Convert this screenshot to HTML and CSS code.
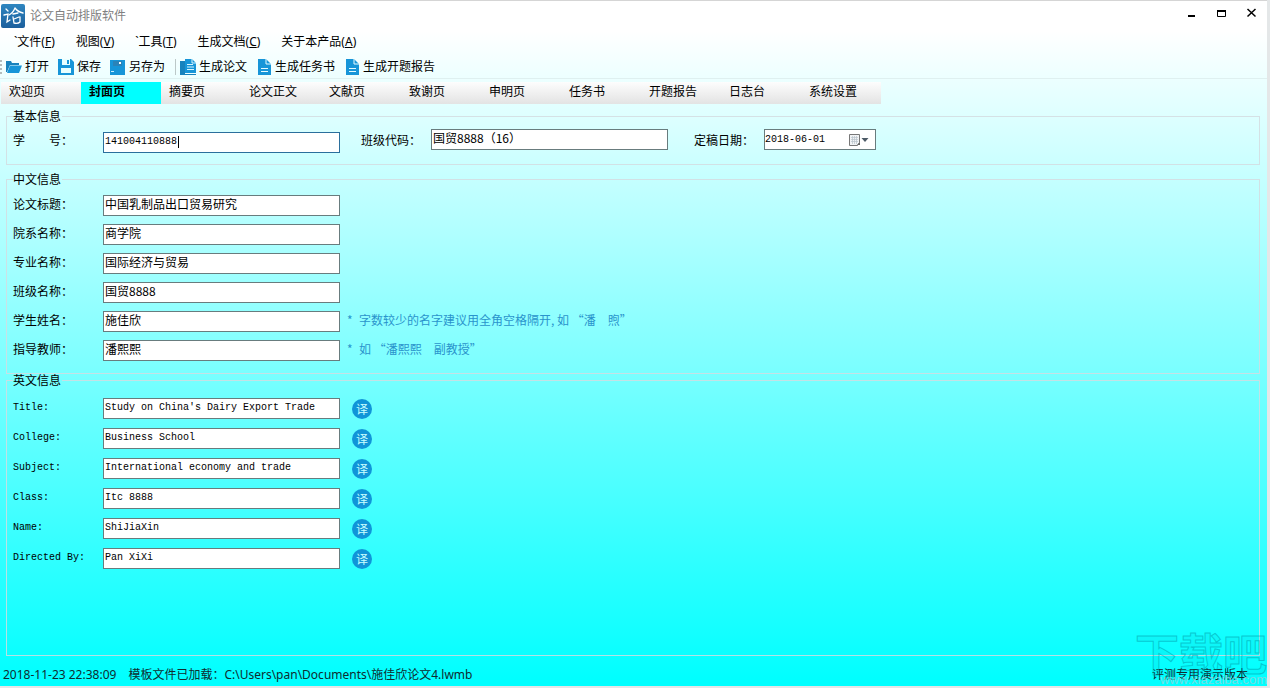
FILE: index.html
```html
<!DOCTYPE html>
<html lang="zh-CN">
<head>
<meta charset="utf-8">
<title>论文自动排版软件</title>
<link rel="stylesheet" href="styles.css">
</head>
<body>
<div class="window">
  <header class="titlebar">
    <svg class="app-logo" viewBox="0 0 24 24" aria-hidden="true">
      <defs><linearGradient id="logo" x1="0" y1="0" x2="0" y2="1"><stop offset="0" stop-color="#2f86c0"/><stop offset="1" stop-color="#1c5f9c"/></linearGradient></defs>
      <rect width="24" height="24" rx="2" fill="url(#logo)"/>
      <g fill="none" stroke="#fff" stroke-width="1.3" stroke-linecap="round">
        <path d="M5 5l2 2M3 11l4-1-1 8 3-2"/>
        <path d="M14 4q-2 5-6 7M14 4q3 4 8 5M12 10l5-1M12 13l1 6q4 1 6-1l0-5M13 15l5-2"/>
      </g>
    </svg>
    <h1 class="app-title">论文自动排版软件</h1>
    <div class="window-buttons">
      <button type="button" class="window-button" aria-label="最小化"><svg viewBox="0 0 12 12"><path d="M2 10h7" stroke="#000" stroke-width="2"/></svg></button>
      <button type="button" class="window-button" aria-label="最大化"><svg viewBox="0 0 12 12"><path d="M1.500 4v6.500h8V4" fill="none" stroke="#000"/><path d="M1 5h9" stroke="#000" stroke-width="2"/></svg></button>
      <button type="button" class="window-button" aria-label="关闭"><svg viewBox="0 0 12 12"><path d="M1.500 3l8 7.500M9.500 3l-8 7.500" stroke="#000" stroke-width="1.500"/></svg></button>
    </div>
  </header>

  <nav class="menubar">
    <button type="button" class="menu">`文件(<u>F</u>)</button>
    <button type="button" class="menu">视图(<u>V</u>)</button>
    <button type="button" class="menu">`工具(<u>T</u>)</button>
    <button type="button" class="menu">生成文档(<u>C</u>)</button>
    <button type="button" class="menu">关于本产品(<u>A</u>)</button>
  </nav>

  <div class="toolbar">
    <span class="grip"></span>
    <button type="button" class="tool"><svg class="tool-icon" viewBox="0 0 16 16"><path d="M0 2h5l1 2h7v2H4L1 13H0z" fill="#1782bd"/><path d="M4 6.500h12L13 14H1z" fill="#1795d8"/></svg>打开</button>
    <button type="button" class="tool"><svg class="tool-icon" viewBox="0 0 16 16"><path d="M0 0h13l3 3v13H0z" fill="#1795d8"/><path d="M4 0h8v6H4zM3 9h10v5H3z" fill="#e9ffff"/><path d="M9 1h2v4H9z" fill="#1795d8"/></svg>保存</button>
    <button type="button" class="tool"><svg class="tool-icon" viewBox="0 0 16 16"><path d="M0 1h15v15H0z" fill="#1795d8"/><path d="M3 2h9v5H3z" fill="#2b83b8"/><path d="M9 3h2v2H9z" fill="#fff"/><path d="M1 12.500h3" stroke="#c8eeff"/></svg>另存为</button>
    <span class="separator"></span>
    <button type="button" class="tool"><svg class="tool-icon" viewBox="0 0 16 16"><path d="M0 2h5v14h11v-1H0z" fill="#1782bd"/><path d="M0 2h5v14H0z" fill="#1782bd"/><path d="M5 0h7l4 4v10H5z" fill="#1795d8"/><path d="M12 0v4h4M7 5.500h6M7 8h7M7 10.500h7" fill="none" stroke="#d8f6ff"/></svg>生成论文</button>
    <button type="button" class="tool"><svg class="doc-icon" viewBox="0 0 13 16"><path d="M0 0h8l5 5v11H0z" fill="#1795d8"/><path d="M8 0v5h5M3 9.500h7M3 12.500h7" fill="none" stroke="#e5fbff"/></svg>生成任务书</button>
    <button type="button" class="tool"><svg class="doc-icon" viewBox="0 0 13 16"><path d="M0 0h8l5 5v11H0z" fill="#1795d8"/><path d="M8 0v5h5M3 9.500h7M3 12.500h7" fill="none" stroke="#e5fbff"/></svg>生成开题报告</button>
  </div>

  <div class="tabs" role="tablist">
    <button type="button" role="tab" class="tab">欢迎页</button>
    <button type="button" role="tab" class="tab tab-active" aria-selected="true">封面页</button>
    <button type="button" role="tab" class="tab">摘要页</button>
    <button type="button" role="tab" class="tab">论文正文</button>
    <button type="button" role="tab" class="tab">文献页</button>
    <button type="button" role="tab" class="tab">致谢页</button>
    <button type="button" role="tab" class="tab">申明页</button>
    <button type="button" role="tab" class="tab">任务书</button>
    <button type="button" role="tab" class="tab">开题报告</button>
    <button type="button" role="tab" class="tab">日志台</button>
    <button type="button" role="tab" class="tab">系统设置</button>
  </div>

  <form class="page">
    <fieldset class="group group-basic">
      <legend>基本信息</legend>
      <div class="basic-row">
        <label class="label" for="sid">学　　号：</label>
        <div class="focus-field"><input class="field latin field-focus" id="sid" value="141004110888"><span class="caret"></span></div>
        <label class="label label-second" for="code">班级代码：</label>
        <input class="field" id="code" value="国贸8888（16）">
        <label class="label label-third" for="date">定稿日期：</label>
        <div class="date-field">
          <input class="date-input latin" id="date" value="2018-06-01">
          <button type="button" class="date-button" aria-label="选择日期">
            <svg viewBox="0 0 22 14"><path d="M1.500 1.500h10v8l-2 3h-8z" fill="#f1f3f5" stroke="#777"/><path d="M3 4.500h7M3 6.500h7M3 8.500h7M4.500 3v8M6.500 3v8M8.500 3v8" stroke="#b9c3cc" stroke-width="0.700"/><path d="M9 12l3-3v3z" fill="#666"/><path d="M13.500 5h7L17 9z" fill="#4c5a66"/></svg>
          </button>
        </div>
      </div>
    </fieldset>

    <fieldset class="group group-chinese">
      <legend>中文信息</legend>
      <div class="row"><label class="label" for="cn-title">论文标题：</label><input class="field" id="cn-title" value="中国乳制品出口贸易研究"></div>
      <div class="row"><label class="label" for="cn-college">院系名称：</label><input class="field" id="cn-college" value="商学院"></div>
      <div class="row"><label class="label" for="cn-major">专业名称：</label><input class="field" id="cn-major" value="国际经济与贸易"></div>
      <div class="row"><label class="label" for="cn-class">班级名称：</label><input class="field" id="cn-class" value="国贸8888"></div>
      <div class="row"><label class="label" for="cn-name">学生姓名：</label><input class="field" id="cn-name" value="施佳欣"><span class="hint"><span class="star">*</span>字数较少的名字建议用全角空格隔开, 如 “潘　煦”</span></div>
      <div class="row"><label class="label" for="cn-teacher">指导教师：</label><input class="field" id="cn-teacher" value="潘熙熙"><span class="hint"><span class="star">*</span>如 “潘熙熙　副教授”</span></div>
    </fieldset>

    <fieldset class="group group-english">
      <legend>英文信息</legend>
      <div class="row"><label class="label latin" for="en-title">Title:</label><input class="field latin" id="en-title" value="Study on China's Dairy Export Trade"><button type="button" class="translate">译</button></div>
      <div class="row"><label class="label latin" for="en-college">College:</label><input class="field latin" id="en-college" value="Business School"><button type="button" class="translate">译</button></div>
      <div class="row"><label class="label latin" for="en-subject">Subject:</label><input class="field latin" id="en-subject" value="International economy and trade"><button type="button" class="translate">译</button></div>
      <div class="row"><label class="label latin" for="en-class">Class:</label><input class="field latin" id="en-class" value="Itc 8888"><button type="button" class="translate">译</button></div>
      <div class="row"><label class="label latin" for="en-name">Name:</label><input class="field latin" id="en-name" value="ShiJiaXin"><button type="button" class="translate">译</button></div>
      <div class="row"><label class="label latin" for="en-teacher">Directed By:</label><input class="field latin" id="en-teacher" value="Pan XiXi"><button type="button" class="translate">译</button></div>
    </fieldset>
  </form>

  <footer class="statusbar">
    <span>2018-11-23 22:38:09</span>
    <span>模板文件已加载：C:\Users\pan\Documents\施佳欣论文4.lwmb</span>
    <span class="edition">评测专用演示版本</span>
  </footer>

  <div class="watermark">
    <span class="watermark-name">下载吧</span>
    <span class="watermark-url">www.xiazaiba.com</span>
  </div>
</div>
</body>
</html>
```
FILE: styles.css
```css
* {
  box-sizing: border-box;
}

body {
  margin: 0;
  background: #e4e7e8;
  color: #000;
  font: 12px/16px "Noto Sans", "Noto Sans CJK SC", sans-serif;
}

button,
input {
  margin: 0;
  padding: 0;
  border: 0;
  background: none;
  color: inherit;
  font: inherit;
}

.window {
  position: relative;
  display: flex;
  flex-direction: column;
  min-height: calc(100vh - 2px);
  margin: 0 3px 2px 0;
  border-top: 1px solid #d5d5d5;
  background: linear-gradient(#fff 30px, #0ff 680px);
}

.titlebar {
  display: flex;
  align-items: center;
  gap: 5px;
  height: 28px;
  padding: 1px 9px 0 1px;
}

.app-logo {
  width: 24px;
  height: 24px;
}

.app-title {
  margin: 0;
  color: #808080;
  font-size: 12px;
  font-weight: 400;
}

.window-buttons {
  display: flex;
  align-self: flex-start;
  gap: 18px;
  margin-left: auto;
  padding-top: 4px;
}

.window-button {
  width: 12px;
  height: 12px;
}

.window-button svg {
  display: block;
}

.menubar {
  display: flex;
  align-items: center;
  gap: 21px;
  height: 26px;
  padding-left: 14px;
}

.toolbar {
  display: flex;
  align-items: center;
  gap: 9px;
  height: 24px;
  border-bottom: 1px solid #dff0f0;
}

.grip {
  width: 2px;
  height: 14px;
  margin-right: -5px;
  background: repeating-linear-gradient(#b4bcbc 0 2px, transparent 2px 4px);
}

.tool {
  display: flex;
  align-items: center;
  gap: 3px;
}

.tool-icon {
  width: 16px;
  height: 16px;
}

.doc-icon {
  width: 13px;
  height: 16px;
  margin: 0 1px 0 2px;
}

.separator {
  width: 1px;
  height: 16px;
  margin: 0 -5px 0 1px;
  background: #bcc8c8;
}

.tabs {
  display: flex;
  padding: 3px 0 0 1px;
  font-family: "Noto Sans CJK SC", sans-serif;
}

.tab {
  width: 80px;
  height: 22px;
  padding: 0 0 4px 8px;
  background: linear-gradient(#fdfdfd, #e3e3e3);
  text-align: left;
}

.tab-active {
  background: #0ff;
  font-weight: 700;
}

.page {
  display: flex;
  flex: 1;
  flex-direction: column;
  padding: 6px 7px 0 6px;
  font-family: "Noto Sans CJK SC", sans-serif;
}

.group {
  min-width: 0;
  margin: 0;
  padding: 7px 6px 11px;
  border: 1px solid rgba(212, 220, 224, 0.85);
}

.group legend {
  padding: 0 1px 0 0;
  line-height: 12px;
}

.group-basic {
  margin-bottom: 8px;
}

.group-chinese,
.group-english {
  display: flex;
  flex-direction: column;
  gap: 8px;
  padding: 10px 6px 12px;
}

.group-english {
  flex: 1;
  gap: 9px;
  padding-top: 12px;
}

.basic-row {
  display: flex;
  align-items: flex-start;
  height: 24px;
}

.row {
  display: flex;
  align-items: center;
  height: 21px;
}

.label {
  flex: none;
  align-self: center;
  width: 90px;
  padding-bottom: 3px;
}

.label-second,
.label-third {
  width: 70px;
  margin-left: 21px;
}

.label-third {
  margin-left: 26px;
}

.field {
  display: block;
  width: 237px;
  height: 21px;
  padding: 0 1px 4px;
  border: 1px solid #687c7e;
  background: #fff;
}

.latin {
  font-family: "Liberation Mono", monospace;
  font-size: 10px;
}

.label.latin {
  padding-bottom: 2px;
}

.field.latin {
  padding-bottom: 2px;
}

.focus-field {
  position: relative;
  align-self: flex-end;
}

.field-focus {
  border-color: #2b6f9c;
  outline: none;
}

.caret {
  position: absolute;
  top: 4px;
  left: 75px;
  width: 1px;
  height: 12px;
  background: #000;
}

.date-field {
  display: flex;
  align-items: center;
  width: 112px;
  height: 21px;
  padding: 0 5px 0 0;
  border: 1px solid #687c7e;
  background: #fff;
}

.date-input {
  flex: 1;
  min-width: 0;
}

.date-button {
  width: 22px;
  height: 14px;
}

.date-button svg {
  display: block;
}

.hint {
  padding: 0 0 3px 7px;
  color: #2a94cc;
}

.star {
  display: inline-block;
  width: 12px;
}

.translate {
  width: 20px;
  height: 20px;
  margin-left: 12px;
  border-radius: 50%;
  background: #1095d8;
  color: #c8ffff;
  line-height: 20px;
}

.statusbar {
  display: flex;
  align-items: center;
  gap: 12px;
  height: 30px;
  padding: 7px 19px 0 3px;
  color: #102c30;
}

.edition {
  margin-left: auto;
}

.watermark {
  position: absolute;
  right: 0;
  bottom: 0;
  display: flex;
  flex-direction: column;
  align-items: flex-end;
  pointer-events: none;
}

.watermark-name {
  color: rgba(0, 190, 200, 0.15);
  font: 700 44px/44px "Noto Sans CJK SC", sans-serif;
  -webkit-text-stroke: 1px rgba(0, 150, 165, 0.5);
}

.watermark-url {
  color: rgba(130, 215, 222, 0.9);
  font: 13px/12px "Liberation Sans", sans-serif;
}
```
